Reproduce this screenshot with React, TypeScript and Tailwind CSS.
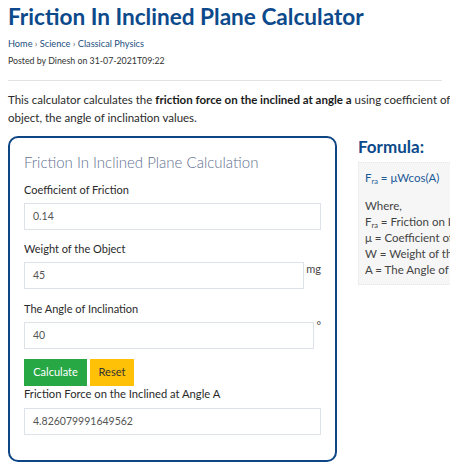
import React from "react";

const font = { fontFamily: 'Lato, "Open Sans", sans-serif' };

function Field({
  label,
  value,
  unit,
  mt,
  unitMt,
}: {
  label: string;
  value: string;
  unit?: string;
  mt: string;
  unitMt?: string;
}) {
  return (
    <div className={mt}>
      <div className="text-[11px] leading-[16px] text-[#2a2a2a]">{label}</div>
      <div className="mt-[5px] flex items-start">
        <div className="flex h-[27px] flex-1 items-center border border-[#dde2e8] bg-white pl-[8px] text-[10.5px] text-[#555]">
          {value}
        </div>
        {unit ? <span className={`ml-[2px] text-[11px] leading-[14px] text-[#444] ${unitMt ?? ""}`}>{unit}</span> : null}
      </div>
    </div>
  );
}

export default function App() {
  return (
    <div className="h-[469px] w-[450px] overflow-hidden bg-white" style={font}>
      <div className="w-[600px] pl-[8px]">
        <h1 className="pt-[1px] text-[22.6px] font-bold leading-[32px] text-[#0c4a8b]">
          Friction In Inclined Plane Calculator
        </h1>
        <div className="mt-[4px] text-[9.2px] leading-[14px] text-[#1d4f80]">
          Home <span className="text-[#666]">›</span> Science <span className="text-[#666]">›</span> Classical Physics
        </div>
        <div className="mt-[3px] text-[8.8px] leading-[14px] text-[#333]">Posted by Dinesh on 31-07-2021T09:22</div>
        <div className="mt-[12px] w-[434px] border-t border-[#e2e2e2]" />
        <p className="mt-[10px] whitespace-nowrap text-[11.5px] leading-[18px] text-[#2a2a2a]">
          This calculator calculates the <b className="font-bold text-[#1a1a1a]">friction force on the inclined at angle a</b> using coefficient of friction, weight of the
          <br />
          object, the angle of inclination values.
        </p>
        <div className="mt-[9px] flex items-start">
          <div className="h-[326px] w-[329px] rounded-[10px] border-2 border-[#0e4585] px-[14px] pt-[14px]">
            <div className="text-[15px] font-light leading-[20px] text-[#5f7090]">Friction In Inclined Plane Calculation</div>
            <Field mt="mt-[10px]" label="Coefficient of Friction" value="0.14" />
            <Field mt="mt-[11px]" label="Weight of the Object" value="45" unit="mg" unitMt="mt-[0px]" />
            <Field mt="mt-[12px]" label="The Angle of Inclination" value="40" unit="°" unitMt="-mt-[3px]" />
            <div className="mt-[10px] flex gap-[3px]">
              <button className="h-[27px] w-[63px] bg-[#28a745] text-[11px] text-white">Calculate</button>
              <button className="h-[27px] w-[44px] bg-[#ffc107] text-[11px] text-[#333]">Reset</button>
            </div>
            <div className="text-[11.2px] leading-[16px] text-[#2a2a2a]">Friction Force on the Inclined at Angle A</div>
            <div className="mt-[6px] flex h-[27px] items-center border border-[#dde2e8] bg-white pl-[8px] text-[10.5px] text-[#555]">
              4.826079991649562
            </div>
          </div>
          <div className="ml-[21px] w-[200px]">
            <div className="text-[17px] font-bold leading-[22px] text-[#0c4a8b]">Formula:</div>
            <div className="mt-[4px] h-[123px] border border-dotted border-[#e6e6e6] bg-[#f6f6f6] px-[6px] pt-[7px] text-[11.5px] leading-[16px] text-[#444]">
              <div className="text-[#1d5a96]">
                F<sub className="text-[7.5px]">ra</sub> = μWcos(A)
              </div>
              <div className="mt-[12px]">Where,</div>
              <div>
                F<sub className="text-[7.5px]">ra</sub> = Friction on Inclined Plane
              </div>
              <div>μ = Coefficient of Friction</div>
              <div>W = Weight of the Object</div>
              <div>A = The Angle of Inclination</div>
            </div>
          </div>
        </div>
      </div>
    </div>
  );
}
